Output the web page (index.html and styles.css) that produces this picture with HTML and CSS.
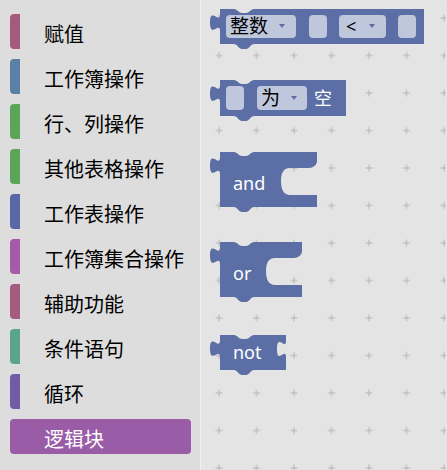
FILE: index.html
```html
<!DOCTYPE html>
<html>
<head>
<meta charset="utf-8">
<link rel="stylesheet" href="styles.css">
</head>
<body>
<div class="app">
  <nav class="toolbox">
    <div class="cat c-assign">赋值</div>
    <div class="cat c-book">工作簿操作</div>
    <div class="cat c-row">行、列操作</div>
    <div class="cat c-row">其他表格操作</div>
    <div class="cat c-sheet">工作表操作</div>
    <div class="cat c-set">工作簿集合操作</div>
    <div class="cat c-assign">辅助功能</div>
    <div class="cat c-cond">条件语句</div>
    <div class="cat c-loop">循环</div>
    <div class="cat c-logic selected">逻辑块</div>
  </nav>
  <div class="workspace">
    <svg class="canvas" viewBox="202 0 245 470" width="245" height="470" xmlns="http://www.w3.org/2000/svg">
      <defs>
        <pattern id="grid" width="37.5" height="37.5" patternUnits="userSpaceOnUse" x="201.25" y="-0.75">
          <path d="M15.25 18.75 H22.25 M18.75 15.25 V22.25" class="plus"/>
        </pattern>
      </defs>
      <rect x="202" y="0" width="245" height="470" fill="url(#grid)"/>

      <!-- compare block -->
      <path class="block" d="M221 9 H235 c3 0 5 4 8 4 h4 c3 0 5 -4 8 -4 H425 V44 H255 c-3 0 -5 5 -8 5 h-4 c-3 0 -5 -5 -8 -5 H221 V31 c0 -10 -10 8 -10 -8.5 s10 2.5 10 -8.5 Z"/>
      <rect class="field" x="227" y="15" width="70" height="23" rx="4"/>
      <text class="ftext" x="231" y="33">整数</text>
      <path class="arrow" d="M280 24 h6 l-3 4 z"/>
      <rect class="field" x="310" y="15" width="18" height="23" rx="4"/>
      <rect class="field" x="340" y="15" width="47" height="23" rx="4"/>
      <text class="ftext lt" x="347" y="33">&lt;</text>
      <path class="arrow" d="M370 24 h6 l-3 4 z"/>
      <rect class="field" x="399" y="15" width="18" height="23" rx="4"/>

      <!-- is empty block -->
      <path class="block" d="M221 80 H235 c3 0 5 4 8 4 h4 c3 0 5 -4 8 -4 H347 V116 H255 c-3 0 -5 5 -8 5 h-4 c-3 0 -5 -5 -8 -5 H221 V102 c0 -10 -10 8 -10 -8.5 s10 2.5 10 -8.5 Z"/>
      <rect class="field" x="227" y="86" width="18" height="24" rx="4"/>
      <rect class="field" x="258" y="86" width="50" height="24" rx="4"/>
      <text class="ftext" x="262" y="105">为</text>
      <path class="arrow" d="M292 96 h6 l-3 4 z"/>
      <text class="ftext white" x="315" y="105">空</text>

      <!-- and block -->
      <path class="block" d="M221 152 H235 c3 0 5 4 8 4 h4 c3 0 5 -4 8 -4 H318 V161 c0 4 -4 7 -8 7 H291 c-6 0 -9 4 -9 13 c0 9 3 14 9 14 H318 V207 H255 c-3 0 -5 5 -8 5 h-4 c-3 0 -5 -5 -8 -5 H221 V174 c0 -10 -10 8 -10 -8.5 s10 2.5 10 -8.5 Z"/>
      <text class="btext" x="234" y="190">and</text>

      <!-- or block -->
      <path class="block" d="M221 242 H235 c3 0 5 4 8 4 h4 c3 0 5 -4 8 -4 H303 V251 c0 4 -4 7 -8 7 H276 c-6 0 -9 4 -9 13 c0 9 3 14 9 14 H303 V297 H255 c-3 0 -5 5 -8 5 h-4 c-3 0 -5 -5 -8 -5 H221 V264 c0 -10 -10 8 -10 -8.5 s10 2.5 10 -8.5 Z"/>
      <text class="btext" x="234" y="280">or</text>

      <!-- not block -->
      <path class="block" d="M221 335 H235 c3 0 5 4 8 4 h4 c3 0 5 -4 8 -4 H287 V341 c0 10 -9 -8 -9 8 s9 -2 9 8 V370 H255 c-3 0 -5 5 -8 5 h-4 c-3 0 -5 -5 -8 -5 H221 V357 c0 -10 -10 8 -10 -8.5 s10 2.5 10 -8.5 Z"/>
      <text class="btext" x="234" y="359">not</text>
    </svg>
  </div>
</div>
</body>
</html>
```
FILE: styles.css
```css
html, body {
  margin: 0;
  padding: 0;
}
body {
  width: 447px;
  height: 470px;
  overflow: hidden;
  background: #e4e4e4;
}
.app {
  display: flex;
  height: 470px;
}
.toolbox {
  width: 201px;
  flex: none;
  background: #dddddd;
  border-right: 1px solid #f0f0f0;
  box-sizing: border-box;
  padding: 14px 0 0 10px;
  display: flex;
  flex-direction: column;
  gap: 10px;
}
.cat {
  width: 181px;
  height: 35px;
  box-sizing: border-box;
  border-left: 10px solid #999;
  border-radius: 4px 0 0 4px;
  padding: 3px 0 0 24px;
  display: flex;
  align-items: center;
  font-family: "Noto Sans CJK SC", "Noto Sans", sans-serif;
  font-size: 20px;
  color: #000;
  white-space: nowrap;
}
.c-assign { border-left-color: #a55b80; }
.c-book { border-left-color: #5b80a5; }
.c-row { border-left-color: #5ba55b; }
.c-sheet { border-left-color: #5b67a5; }
.c-set { border-left-color: #a55ba5; }
.c-cond { border-left-color: #5ba58c; }
.c-loop { border-left-color: #745ba5; }
.c-logic { border-left-color: #9a5ca6; }
.cat.selected {
  background: #9a5ca6;
  border-radius: 4px;
  color: #fff;
}
.workspace {
  flex: 1;
  background: #e4e4e4;
}
.canvas {
  display: block;
}
.plus {
  stroke: #b4b4b4;
  stroke-width: 1;
  fill: none;
}
.block {
  fill: #5b6ea5;
}
.field {
  fill: #bec7dc;
}
.arrow {
  fill: #5b6ea5;
}
.ftext {
  font-family: "Noto Sans CJK SC", "Noto Sans", sans-serif;
  font-size: 19px;
  fill: #000;
}
.ftext.lt {
  font-family: "Noto Sans", sans-serif;
  font-size: 18px;
}
.ftext.white {
  fill: #fff;
  font-size: 18px;
}
.btext {
  font-family: "Noto Sans", sans-serif;
  font-size: 18px;
  fill: #fff;
}
```
